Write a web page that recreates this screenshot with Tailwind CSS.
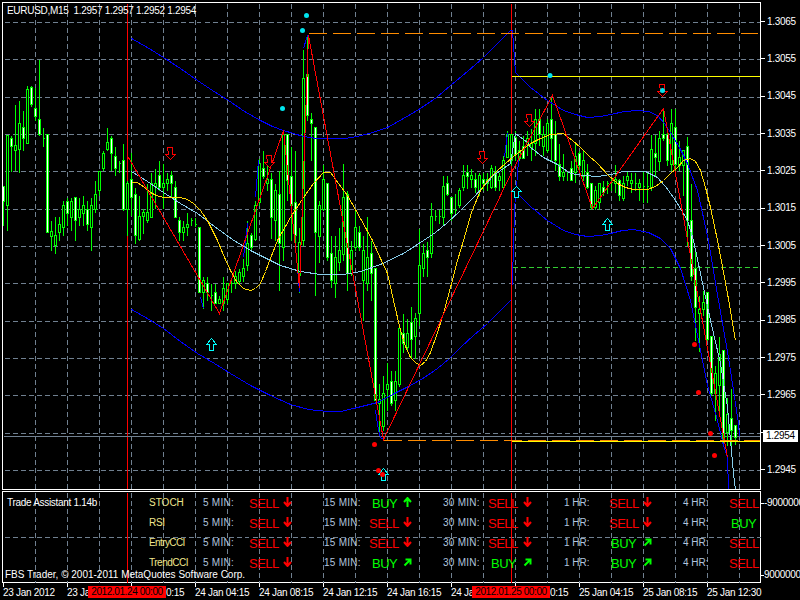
<!DOCTYPE html>
<html>
<head>
<meta charset="utf-8">
<script src="https://cdn.jsdelivr.net/npm/@tailwindcss/browser@4"></script>
</head>
<body class="bg-black">
<div class="relative w-[800px] h-[600px] overflow-hidden bg-black text-white font-['Liberation_Sans',Arial,sans-serif] text-[10px] tracking-[-0.3px] leading-none">

  <div class="flex h-[490px]">
    <div class="relative w-[761px] h-[490px]">
      <svg class="block" width="761" height="490" viewBox="0 0 761 490" fill="none">
        <g transform="translate(.5 .5)" shape-rendering="crispEdges">
          <path stroke="#708090" stroke-dasharray="5 3" d="M35 3V489M67 3V489M99 3V489M131 3V489M163 3V489M195 3V489M227 3V489M259 3V489M291 3V489M323 3V489M355 3V489M387 3V489M419 3V489M451 3V489M483 3V489M515 3V489M547 3V489M579 3V489M611 3V489M643 3V489M675 3V489M707 3V489M739 3V489M4 22H760M4 59H760M4 97H760M4 134H760M4 171H760M4 209H760M4 246H760M4 283H760M4 321H760M4 358H760M4 395H760M4 433H760M4 470H760"/>
          <path stroke="#ff0000" d="M127 3V489M511 3V489"/>
          <path stroke="#708090" d="M3 436H760"/>
          <path stroke="#32cd32" stroke-dasharray="5 3" d="M512 267H760"/>
          <path stroke="#00ff00" d="M3 186V225M7 135V230M11 135V171M15 104V170M19 100V172M23 110V150M27 85V143M31 85V106M35 87V120M39 59V135M43 127V146M42 138h2M47 134V232M51 220V250M55 216V253M59 216V240M63 200V235M67 197V225M71 197V230M75 197V240M79 197V225M83 195V225M87 200V230M91 197V250M95 180V212M99 170V195M103 150V170M107 127V150M111 135V170M115 146V175M119 160V172M118 163h2M123 143V210M127 180V235M131 152V215M135 187V243M139 195V240M143 208V233M147 183V222M151 172V217M155 168V208M159 160V190M163 163V208M167 172V190M171 170V197M175 180V217M179 216V240M183 220V240M187 212V235M191 217V225M190 220h2M195 217V226M194 224h2M199 227V292M203 276V308M207 276V300M211 283V310M210 295h2M215 283V303M219 295V303M223 276V310M227 283V303M231 280V292M230 283h2M235 270V288M239 268V283M243 258V281M247 220V270M251 232V250M255 200V240M259 158V205M263 150V178M267 155V190M271 172V238M275 183V240M279 170V290M283 130V260M287 134V200M291 146V240M295 150V245M299 227V292M303 49V245M307 35V120M311 112V160M315 127V295M319 200V262M323 164V210M327 183V260M331 235V287M335 235V297M339 227V270M343 163V260M347 190V290M351 240V275M355 210V250M359 225V250M363 235V320M367 216V290M371 240V300M375 268V400M379 383V432M383 375V430M387 362V410M391 370V405M395 370V410M399 325V386M403 313V352M407 318V350M411 306V358M415 312V358M419 228V325M423 243V276M427 241V276M431 202V257M435 209V220M434 216h2M439 209V223M438 216h2M443 175V225M447 175V195M451 197V220M455 193V214M454 210h2M459 187V207M463 164V190M467 164V188M471 168V187M475 172V192M479 172V195M483 172V190M487 172V190M491 164V188M495 165V190M499 172V190M503 155V187M507 130V157M511 134V165M515 130V160M519 140V160M523 135V158M527 130V155M531 128V160M535 108V155M539 108V145M543 125V155M547 118V152M551 95V160M555 120V170M559 143V180M563 153V180M567 170V180M566 172h2M571 160V180M575 143V182M579 150V170M583 150V180M587 163V188M591 183V209M595 185V209M599 183V209M603 180V195M607 180V193M606 183h2M611 176V190M610 182h2M615 164V192M619 178V200M623 175V200M627 170V185M631 172V192M635 172V190M634 183h2M639 178V200M643 170V202M642 186h2M647 172V202M646 186h2M651 134V190M655 134V175M659 130V170M663 110V140M667 130V165M671 108V170M675 108V170M679 140V170M683 150V195M687 136V245M691 183V280M695 250V340M699 295V351M703 290V315M707 292V340M711 336V395M715 365V420M719 336V410M723 350V445M727 397V445M731 388V445M735 425V444"/>
          <path fill="#000" stroke="#00ff00" d="M6 135h2V205h-2zM14 145h2V150h-2zM18 123h2V149h-2zM26 89h2V143h-2zM50 231h2V236h-2zM54 235h2V245h-2zM58 224h2V232h-2zM62 205h2V227h-2zM70 201h2V217h-2zM78 209h2V217h-2zM82 205h2V213h-2zM90 205h2V227h-2zM94 194h2V209h-2zM98 171h2V190h-2zM102 153h2V168h-2zM106 142h2V149h-2zM126 183h2V209h-2zM138 216h2V239h-2zM142 212h2V216h-2zM146 212h2V220h-2zM150 183h2V217h-2zM154 183h2V186h-2zM162 183h2V187h-2zM166 179h2V183h-2zM182 227h2V232h-2zM186 224h2V227h-2zM202 280h2V292h-2zM218 299h2V303h-2zM222 288h2V303h-2zM226 283h2V299h-2zM234 276h2V283h-2zM238 272h2V281h-2zM242 268h2V276h-2zM246 243h2V265h-2zM254 205h2V239h-2zM258 163h2V202h-2zM266 179h2V183h-2zM274 190h2V220h-2zM282 134h2V247h-2zM298 242h2V275h-2zM302 78h2V240h-2zM318 205h2V236h-2zM322 179h2V209h-2zM334 257h2V283h-2zM338 250h2V262h-2zM342 197h2V254h-2zM350 250h2V273h-2zM354 227h2V247h-2zM362 250h2V280h-2zM366 257h2V283h-2zM378 399h2V403h-2zM382 393h2V426h-2zM386 384h2V389h-2zM394 381h2V400h-2zM398 328h2V384h-2zM406 333h2V347h-2zM414 318h2V336h-2zM418 265h2V313h-2zM422 253h2V268h-2zM430 216h2V253h-2zM442 186h2V217h-2zM458 190h2V205h-2zM462 175h2V187h-2zM470 175h2V179h-2zM478 175h2V190h-2zM486 179h2V183h-2zM490 168h2V187h-2zM498 176h2V180h-2zM502 160h2V187h-2zM506 134h2V157h-2zM510 134h2V160h-2zM518 150h2V158h-2zM526 138h2V144h-2zM530 143h2V147h-2zM534 119h2V143h-2zM542 134h2V146h-2zM546 123h2V150h-2zM562 172h2V176h-2zM574 156h2V172h-2zM582 160h2V176h-2zM594 190h2V207h-2zM598 183h2V202h-2zM614 179h2V183h-2zM622 183h2V198h-2zM626 176h2V180h-2zM630 180h2V183h-2zM638 183h2V187h-2zM650 149h2V187h-2zM658 138h2V161h-2zM670 123h2V164h-2zM678 157h2V165h-2zM682 150h2V165h-2zM698 309h2V313h-2zM702 302h2V309h-2zM714 373h2V393h-2zM718 354h2V385h-2zM726 414h2V432h-2z"/>
          <path fill="#fff" stroke="#00ff00" d="M2 186h2V201h-2zM10 138h2V146h-2zM22 127h2V138h-2zM30 87h2V104h-2zM34 108h2V116h-2zM38 119h2V134h-2zM46 134h2V232h-2zM66 201h2V213h-2zM74 197h2V220h-2zM86 209h2V224h-2zM110 138h2V153h-2zM114 156h2V168h-2zM122 160h2V209h-2zM130 179h2V197h-2zM134 194h2V235h-2zM158 175h2V187h-2zM170 175h2V183h-2zM174 187h2V217h-2zM178 220h2V232h-2zM198 227h2V292h-2zM206 283h2V292h-2zM214 292h2V303h-2zM250 235h2V247h-2zM262 168h2V176h-2zM270 179h2V217h-2zM278 194h2V243h-2zM286 134h2V180h-2zM290 176h2V205h-2zM294 202h2V235h-2zM306 74h2V115h-2zM310 119h2V123h-2zM314 127h2V232h-2zM326 183h2V257h-2zM330 253h2V280h-2zM346 194h2V273h-2zM358 232h2V247h-2zM370 253h2V273h-2zM374 268h2V400h-2zM390 381h2V403h-2zM402 333h2V343h-2zM410 322h2V339h-2zM426 250h2V257h-2zM446 183h2V194h-2zM450 197h2V213h-2zM466 172h2V176h-2zM474 179h2V187h-2zM482 179h2V183h-2zM494 172h2V187h-2zM514 137h2V154h-2zM522 146h2V158h-2zM538 119h2V134h-2zM550 119h2V138h-2zM554 134h2V160h-2zM558 164h2V176h-2zM570 168h2V180h-2zM578 153h2V165h-2zM586 172h2V187h-2zM590 183h2V207h-2zM602 187h2V192h-2zM618 180h2V195h-2zM654 153h2V157h-2zM662 134h2V138h-2zM666 134h2V160h-2zM674 127h2V164h-2zM686 146h2V220h-2zM690 220h2V276h-2zM694 268h2V307h-2zM706 292h2V339h-2zM710 336h2V393h-2zM722 350h2V438h-2zM730 418h2V430h-2zM734 425h2V437h-2z"/>

          <polyline stroke="#0000ff" points="131,38 147,47 163,57 180,68 197,80 212,90 228,100 244,111 260,120 272,126 283,130 303,136 316,138 330,138 344,138 357,136 372,132 387,127 403,118 420,108 436,97 450,85 467,71 483,57 497,43 510,30 512,30 515,72 530,87 547,100 563,110 575,114 587,117 600,116 610,114 624,111 637,110 648,111 657,115 664,123 670,132 679,147 687,163 697,190 708,240 718,300 728,357 738,423 739,436"/>
          <polyline stroke="#0000ff" points="131,309 147,318 163,328 180,341 197,353 214,363 230,373 250,385 270,395 290,404 308,409 327,411 340,411 353,408 365,405 377,402 394,393 410,385 424,377 437,368 449,358 460,347 473,335 487,323 498,312 510,300"/>
          <polyline stroke="#0000ff" points="515,190 513,240 512,285"/>
          <polyline stroke="#0000ff" points="517,193 530,206 547,220 563,230 575,234 587,236 600,235 610,233 622,230 633,229 648,232 660,238 670,248 680,268 690,300 698,340 707,385 717,420 723,445 727,457 728,489"/>
          <path stroke="#0000ff" d="M303 48L307 35M507 133L504 157M518 160L516 187M297 267L299 292M200 297L203 308M247 223L243 257M258 160L255 197M375 410L378 430L380 437L383 439"/>

          <polyline stroke="#87ceeb" points="131,171 147,181 163,192 180,203 197,213 214,226 232,239 250,250 260,255 270,260 280,265 300,271 320,274 343,274 360,271 380,264 403,253 423,240 435,232 447,222 460,210 473,197 483,186 493,175 503,168 510,163 515,133 527,142 530,147 543,157 557,164 570,173 584,175 597,176 610,174 623,171 645,171 657,177 665,186 673,197 680,208 687,220 693,240 700,273 710,320 720,363 727,407 733,473 735,489"/>

          <polyline stroke="#ffd700" points="131,182 137,182 144,187 150,192 156,195 163,197 180,197 187,199 193,203 200,210 207,220 212,230 217,240 224,257 230,270 236,281 243,288 250,290 255,288 260,283 265,271 270,258 277,240 290,217 303,197 313,183 323,172 330,172 338,183 347,195 360,218 372,240 380,258 387,273 393,300 400,330 405,346 410,357 415,362 420,365 425,361 430,352 436,335 443,313 450,287 457,260 463,240 471,212 480,190 488,179 497,170 513,156 530,143 540,138 550,134 563,133 572,140 580,147 588,155 597,163 607,174 617,183 625,187 633,189 647,189 655,186 663,180 670,173 677,167 683,160 690,158 695,161 700,170 705,187 710,207 717,240 727,293 735,340"/>

          <polyline stroke="#ff0000" points="128,157 219,313 283,130 299,287 308,35 383,439 512,170 552,95 592,208 663,108 727,457"/>

          <path stroke="#ffff00" d="M511 76H760M511 441H760"/>
          <path stroke="#ff8c00" stroke-dasharray="18 6" d="M308 33H757M383 440H760"/>

          <g stroke="#ff0000" fill="#000">
            <path d="M167 147h5v7h3l-5 5l-5 -5h3z"/>
            <path d="M266 155h5v7h3l-5 5l-5 -5h3z"/>
            <path d="M479 151h5v7h3l-5 5l-5 -5h3z"/>
            <path d="M526 114h5v7h3l-5 5l-5 -5h3z"/>
            <path d="M659 84h5v7h3l-5 5l-5 -5h3z"/>
          </g>
          <g stroke="#00ffff" fill="#000">
            <path d="M211 338l5 6h-3v6h-4v-6h-3z"/>
            <path d="M516 186l5 5h-3v6h-4v-6h-3z"/>
            <path d="M607 218l5 6h-3v6h-4v-6h-3z"/>
            <path d="M383 468l5 6h-3v6h-4v-6h-3z"/>
          </g>
        </g>
        <g fill="#00e5ee">
          <circle cx="306.5" cy="15.5" r="2.5"/>
          <circle cx="302.5" cy="30.5" r="2.5"/>
          <circle cx="282.5" cy="108.5" r="2.5"/>
          <circle cx="550" cy="75.5" r="2.5"/>
          <circle cx="662.5" cy="90.5" r="2.5"/>
        </g>
        <g fill="#ff0000">
          <circle cx="374.5" cy="444.5" r="2.5"/>
          <circle cx="378.5" cy="470.5" r="2.5"/>
          <circle cx="382.5" cy="474.5" r="2.5"/>
          <circle cx="694.5" cy="344.5" r="2.5"/>
          <circle cx="698.5" cy="392.5" r="2.5"/>
          <circle cx="710.5" cy="433.5" r="2.5"/>
          <circle cx="714.5" cy="455.5" r="2.5"/>
        </g>
        <rect x="2.5" y="2.5" width="758" height="487" stroke="#fff" shape-rendering="crispEdges"/>
      </svg>
      <div class="absolute left-[7px] top-[6px] whitespace-pre">EURUSD,M15  1.2957 1.2957 1.2952 1.2954</div>
    </div>

    <div class="relative w-[39px] pt-[3px] flex flex-col">
      <div class="flex items-center h-[37.33px]"><span class="w-[4px] h-px bg-white"></span><span class="ml-[2px]">1.3065</span></div>
      <div class="flex items-center h-[37.33px]"><span class="w-[4px] h-px bg-white"></span><span class="ml-[2px]">1.3055</span></div>
      <div class="flex items-center h-[37.33px]"><span class="w-[4px] h-px bg-white"></span><span class="ml-[2px]">1.3045</span></div>
      <div class="flex items-center h-[37.33px]"><span class="w-[4px] h-px bg-white"></span><span class="ml-[2px]">1.3035</span></div>
      <div class="flex items-center h-[37.33px]"><span class="w-[4px] h-px bg-white"></span><span class="ml-[2px]">1.3025</span></div>
      <div class="flex items-center h-[37.33px]"><span class="w-[4px] h-px bg-white"></span><span class="ml-[2px]">1.3015</span></div>
      <div class="flex items-center h-[37.33px]"><span class="w-[4px] h-px bg-white"></span><span class="ml-[2px]">1.3005</span></div>
      <div class="flex items-center h-[37.33px]"><span class="w-[4px] h-px bg-white"></span><span class="ml-[2px]">1.2995</span></div>
      <div class="flex items-center h-[37.33px]"><span class="w-[4px] h-px bg-white"></span><span class="ml-[2px]">1.2985</span></div>
      <div class="flex items-center h-[37.33px]"><span class="w-[4px] h-px bg-white"></span><span class="ml-[2px]">1.2975</span></div>
      <div class="flex items-center h-[37.33px]"><span class="w-[4px] h-px bg-white"></span><span class="ml-[2px]">1.2965</span></div>
      <div class="flex items-center h-[37.33px]"><span class="w-[4px] h-px bg-white"></span></div>
      <div class="flex items-center h-[37.33px]"><span class="w-[4px] h-px bg-white"></span><span class="ml-[2px]">1.2945</span></div>
      <div class="absolute left-[2px] top-[430px] w-[35px] h-[12px] bg-white text-black flex items-center justify-center">1.2954</div>
    </div>
  </div>

  <div class="flex h-[92px] mt-px">
    <div class="relative ml-[2px] w-[759px] h-[92px] border border-white">
      <svg class="absolute -left-[3px] -top-[492px]" width="761" height="583" viewBox="0 0 761 583" fill="none">
        <g transform="translate(.5 .5)" shape-rendering="crispEdges">
          <path stroke="#708090" stroke-dasharray="5 3" d="M35 492V582M67 492V582M99 492V582M131 492V582M163 492V582M195 492V582M227 492V582M259 492V582M291 492V582M323 492V582M355 492V582M387 492V582M419 492V582M451 492V582M483 492V582M515 492V582M547 492V582M579 492V582M611 492V582M643 492V582M675 492V582M707 492V582M739 492V582M4 537H760"/>
          <path stroke="#ff0000" d="M127 492V582M511 492V582"/>
        </g>
      </svg>
      <div class="relative pt-px grid grid-cols-[146px_54px_46px_34px_41px_45px_34px_40px_45px_35px_41px_45px_34px_40px_46px_31px] auto-rows-[20px] items-center">
        <div class="pl-[4px] whitespace-nowrap -mt-[1px]">Trade Assistant 1.14b</div>
        <div class="text-[#f0e68c] tracking-normal">STOCH</div>
        <div class="text-[#b0c4de] tracking-[0.25px]">5 MIN:</div>
        <div class="text-[#ff0000] text-[13px] tracking-[-0.5px]">SELL</div>
        <svg class="-mt-[3px]" width="9" height="10" viewBox="0 0 9 10" fill="none" stroke="#ff0000" stroke-width="2"><path d="M4.5 0V9M1 5l3.5 4L8 5"/></svg>
        <div class="text-[#b0c4de] tracking-[0.25px]">15 MIN:</div>
        <div class="text-[#00ff00] text-[13px] tracking-[-0.5px] pl-[3px]">BUY</div>
        <svg class="-mt-[3px]" width="9" height="10" viewBox="0 0 9 10" fill="none" stroke="#00ff00" stroke-width="2"><path d="M4.5 10V1M1 5l3.5 -4L8 5"/></svg>
        <div class="text-[#b0c4de] tracking-[0.25px]">30 MIN:</div>
        <div class="text-[#ff0000] text-[13px] tracking-[-0.5px]">SELL</div>
        <svg class="-mt-[3px]" width="9" height="10" viewBox="0 0 9 10" fill="none" stroke="#ff0000" stroke-width="2"><path d="M4.5 0V9M1 5l3.5 4L8 5"/></svg>
        <div class="text-[#b0c4de] tracking-normal">1 HR:</div>
        <div class="text-[#ff0000] text-[13px] tracking-[-0.5px]">SELL</div>
        <svg class="-mt-[3px]" width="9" height="10" viewBox="0 0 9 10" fill="none" stroke="#ff0000" stroke-width="2"><path d="M4.5 0V9M1 5l3.5 4L8 5"/></svg>
        <div class="text-[#b0c4de] tracking-normal">4 HR:</div>
        <div class="text-[#ff0000] text-[13px] tracking-[-0.5px]">SELL</div>

        <div></div>
        <div class="text-[#f0e68c]">RSI</div>
        <div class="text-[#b0c4de] tracking-[0.25px]">5 MIN:</div>
        <div class="text-[#ff0000] text-[13px] tracking-[-0.5px]">SELL</div>
        <svg class="-mt-[3px]" width="9" height="10" viewBox="0 0 9 10" fill="none" stroke="#ff0000" stroke-width="2"><path d="M4.5 0V9M1 5l3.5 4L8 5"/></svg>
        <div class="text-[#b0c4de] tracking-[0.25px]">15 MIN:</div>
        <div class="text-[#ff0000] text-[13px] tracking-[-0.5px]">SELL</div>
        <svg class="-mt-[3px]" width="9" height="10" viewBox="0 0 9 10" fill="none" stroke="#ff0000" stroke-width="2"><path d="M4.5 0V9M1 5l3.5 4L8 5"/></svg>
        <div class="text-[#b0c4de] tracking-[0.25px]">30 MIN:</div>
        <div class="text-[#ff0000] text-[13px] tracking-[-0.5px]">SELL</div>
        <svg class="-mt-[3px]" width="9" height="10" viewBox="0 0 9 10" fill="none" stroke="#ff0000" stroke-width="2"><path d="M4.5 0V9M1 5l3.5 4L8 5"/></svg>
        <div class="text-[#b0c4de] tracking-normal">1 HR:</div>
        <div class="text-[#ff0000] text-[13px] tracking-[-0.5px]">SELL</div>
        <svg class="-mt-[3px]" width="9" height="10" viewBox="0 0 9 10" fill="none" stroke="#ff0000" stroke-width="2"><path d="M4.5 0V9M1 5l3.5 4L8 5"/></svg>
        <div class="text-[#b0c4de] tracking-normal">4 HR:</div>
        <div class="text-[#00ff00] text-[13px] tracking-[-0.5px] pl-[2px]">BUY</div>

        <div></div>
        <div class="text-[#f0e68c] tracking-[-0.6px]">EntryCCI</div>
        <div class="text-[#b0c4de] tracking-[0.25px]">5 MIN:</div>
        <div class="text-[#ff0000] text-[13px] tracking-[-0.5px]">SELL</div>
        <svg class="-mt-[3px]" width="9" height="10" viewBox="0 0 9 10" fill="none" stroke="#ff0000" stroke-width="2"><path d="M4.5 0V9M1 5l3.5 4L8 5"/></svg>
        <div class="text-[#b0c4de] tracking-[0.25px]">15 MIN:</div>
        <div class="text-[#ff0000] text-[13px] tracking-[-0.5px]">SELL</div>
        <svg class="-mt-[3px]" width="9" height="10" viewBox="0 0 9 10" fill="none" stroke="#ff0000" stroke-width="2"><path d="M4.5 0V9M1 5l3.5 4L8 5"/></svg>
        <div class="text-[#b0c4de] tracking-[0.25px]">30 MIN:</div>
        <div class="text-[#ff0000] text-[13px] tracking-[-0.5px]">SELL</div>
        <svg class="-mt-[3px]" width="9" height="10" viewBox="0 0 9 10" fill="none" stroke="#ff0000" stroke-width="2"><path d="M4.5 0V9M1 5l3.5 4L8 5"/></svg>
        <div class="text-[#b0c4de] tracking-normal">1 HR:</div>
        <div class="text-[#00ff00] text-[13px] tracking-[-0.5px] pl-[2px]">BUY</div>
        <svg class="-mt-[3px]" width="9" height="10" viewBox="0 0 9 10" fill="none" stroke="#00ff00" stroke-width="2"><path d="M1.5 8.5L6.5 3.5M2.5 2.5H7.5V7.5"/></svg>
        <div class="text-[#b0c4de] tracking-normal">4 HR:</div>
        <div class="text-[#ff0000] text-[13px] tracking-[-0.5px]">SELL</div>

        <div></div>
        <div class="text-[#f0e68c] tracking-[-0.5px]">TrendCCI</div>
        <div class="text-[#b0c4de] tracking-[0.25px]">5 MIN:</div>
        <div class="text-[#ff0000] text-[13px] tracking-[-0.5px]">SELL</div>
        <svg class="-mt-[3px]" width="9" height="10" viewBox="0 0 9 10" fill="none" stroke="#ff0000" stroke-width="2"><path d="M4.5 0V9M1 5l3.5 4L8 5"/></svg>
        <div class="text-[#b0c4de] tracking-[0.25px]">15 MIN:</div>
        <div class="text-[#00ff00] text-[13px] tracking-[-0.5px] pl-[3px]">BUY</div>
        <svg class="-mt-[3px]" width="9" height="10" viewBox="0 0 9 10" fill="none" stroke="#00ff00" stroke-width="2"><path d="M1.5 8.5L6.5 3.5M2.5 2.5H7.5V7.5"/></svg>
        <div class="text-[#b0c4de] tracking-[0.25px]">30 MIN:</div>
        <div class="text-[#00ff00] text-[13px] tracking-[-0.5px] pl-[3px]">BUY</div>
        <svg class="-mt-[3px]" width="9" height="10" viewBox="0 0 9 10" fill="none" stroke="#00ff00" stroke-width="2"><path d="M1.5 8.5L6.5 3.5M2.5 2.5H7.5V7.5"/></svg>
        <div class="text-[#b0c4de] tracking-normal">1 HR:</div>
        <div class="text-[#00ff00] text-[13px] tracking-[-0.5px] pl-[2px]">BUY</div>
        <svg class="-mt-[3px]" width="9" height="10" viewBox="0 0 9 10" fill="none" stroke="#00ff00" stroke-width="2"><path d="M1.5 8.5L6.5 3.5M2.5 2.5H7.5V7.5"/></svg>
        <div class="text-[#b0c4de] tracking-normal">4 HR:</div>
        <div class="text-[#ff0000] text-[13px] tracking-[-0.5px]">SELL</div>
      </div>
      <div class="absolute left-[2px] top-[78px] whitespace-nowrap tracking-normal">FBS Trader, © 2001-2011 MetaQuotes Software Corp.</div>
    </div>
    <div class="relative flex-1">
      <div class="absolute left-0 top-[7px] flex items-center"><span class="w-[3px] h-px bg-white"></span><span class="whitespace-nowrap">-9000000</span></div>
      <div class="absolute left-0 top-[79px] flex items-center"><span class="w-[3px] h-px bg-white"></span><span class="whitespace-nowrap">9000000</span></div>
    </div>
  </div>

  <div class="relative h-[18px] pl-[3px] flex">
    <div class="w-[64px]"><div class="w-px h-[4px] bg-white"></div><div class="mt-[1px] whitespace-nowrap">23 Jan 2012</div></div>
    <div class="w-[64px]"><div class="w-px h-[4px] bg-white"></div><div class="mt-[1px] whitespace-nowrap">23 Ja</div></div>
    <div class="w-[64px]"><div class="w-px h-[4px] bg-white"></div><div class="mt-[1px] pl-[35px] whitespace-nowrap">0:15</div></div>
    <div class="w-[64px]"><div class="w-px h-[4px] bg-white"></div><div class="mt-[1px] whitespace-nowrap">24 Jan 04:15</div></div>
    <div class="w-[64px]"><div class="w-px h-[4px] bg-white"></div><div class="mt-[1px] whitespace-nowrap">24 Jan 08:15</div></div>
    <div class="w-[64px]"><div class="w-px h-[4px] bg-white"></div><div class="mt-[1px] whitespace-nowrap">24 Jan 12:15</div></div>
    <div class="w-[64px]"><div class="w-px h-[4px] bg-white"></div><div class="mt-[1px] whitespace-nowrap">24 Jan 16:15</div></div>
    <div class="w-[64px]"><div class="w-px h-[4px] bg-white"></div><div class="mt-[1px] whitespace-nowrap">24 Ja</div></div>
    <div class="w-[64px]"><div class="w-px h-[4px] bg-white"></div><div class="mt-[1px] pl-[35px] whitespace-nowrap">0:15</div></div>
    <div class="w-[64px]"><div class="w-px h-[4px] bg-white"></div><div class="mt-[1px] whitespace-nowrap">25 Jan 04:15</div></div>
    <div class="w-[64px]"><div class="w-px h-[4px] bg-white"></div><div class="mt-[1px] whitespace-nowrap">25 Jan 08:15</div></div>
    <div class="w-[64px]"><div class="w-px h-[4px] bg-white"></div><div class="mt-[1px] whitespace-nowrap">25 Jan 12:30</div></div>
    <div class="absolute left-[88px] top-[3px] w-[78px] h-[12px] bg-[#ff0000] text-black tracking-[-0.4px] flex items-center justify-center whitespace-nowrap">2012.01.24 00:00</div>
    <div class="absolute left-[472px] top-[3px] w-[78px] h-[12px] bg-[#ff0000] text-black tracking-[-0.4px] flex items-center justify-center whitespace-nowrap">2012.01.25 00:00</div>
  </div>
</div>
</body>
</html>
